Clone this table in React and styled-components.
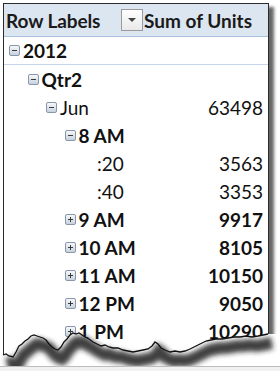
import React from 'react';
import styled, { createGlobalStyle } from 'styled-components';

const GlobalStyle = createGlobalStyle`
    html, body {
        margin: 0;
        padding: 0;
        background: #f1f1f1;
    }
    body {
        font-family: Lato, "Open Sans", sans-serif;
    }`;

const Page = styled.div`
    position: relative;
    width: 280px;
    height: 367px;
    box-sizing: border-box;
    padding: 3px 0 0 3px;
    background: #fff;
    border-bottom: 1px solid #bcbcbc;
    overflow: hidden`;

const Card = styled.div`
    width: 266px;
    box-sizing: border-box;
    border: 1px solid #2b2b2b;
    padding-bottom: 16px;
    background: #fff;
    box-shadow: 5px 4px 3px rgba(0, 0, 0, 0.6)`;

const Header = styled.div`
    display: flex;
    align-items: center;
    height: 32px;
    background: #dce6f1;
    border-bottom: 1px solid #a9c0de;
    color: #1a1a1a;
    font-weight: 700;
    font-size: 19px`;

const HeaderLabel = styled.div`
    display: flex;
    align-items: center;
    width: 140px;
    padding-left: 2px;
    box-sizing: border-box`;

const HeaderTitle = styled.span`
    margin-right: auto;
    letter-spacing: -0.1px`;

const DropButton = styled.span`
    display: flex;
    align-items: center;
    justify-content: center;
    width: 22px;
    height: 22px;
    margin-right: 1px;
    border: 1px solid #9a9a9a;
    background: linear-gradient(#ffffff, #e9e9e9);
    box-sizing: border-box`;

const Arrow = styled.span`
    width: 0;
    height: 0;
    border-left: 4px solid transparent;
    border-right: 4px solid transparent;
    border-top: 4px solid #444`;

const Row = styled.div`
    display: grid;
    grid-template-columns: 1fr auto;
    align-items: center;
    height: ${p => (p.divider ? 27 : 28)}px;
    padding-left: ${p => 5 + p.level * 18.5}px;
    padding-right: 5px;
    border-bottom: ${p => (p.divider ? '1px solid #c5d5ea' : 'none')};
    color: #111;
    font-size: 19px;
    font-weight: ${p => (p.bold ? 700 : 400)}`;

const Label = styled.div`
    display: flex;
    align-items: center`;

const Value = styled.div`
    text-align: right`;

const Toggle = styled.span`
    position: relative;
    flex: none;
    width: 11px;
    height: 11px;
    margin-right: 3px;
    box-sizing: border-box;
    border: 1px solid ${p => (p.empty ? 'transparent' : '#8796ab')};
    border-radius: 2px;
    background: ${p => (p.empty ? 'none' : 'linear-gradient(#f6f8fb, #c8d1dd)')};

    &::before, &::after {
        content: '';
        position: absolute;
        background: #3a3a3a;
        display: ${p => (p.empty ? 'none' : 'block')};
    }
    &::before {
        left: 2px;
        top: 4px;
        width: 5px;
        height: 1px;
    }
    &::after {
        left: 4px;
        top: 2px;
        width: 1px;
        height: 5px;
        display: ${p => (p.kind === 'plus' ? 'block' : 'none')};
    }`;

const TornEdge = styled.svg`
    position: absolute;
    left: 0;
    top: 0;
    pointer-events: none`;

const rows = [
    { label: '2012', level: 0, bold: true, toggle: 'minus', divider: true },
    { label: 'Qtr2', level: 1, bold: true, toggle: 'minus' },
    { label: 'Jun', level: 2, toggle: 'minus', value: '63498' },
    { label: '8 AM', level: 3, bold: true, toggle: 'minus' },
    { label: ':20', level: 4, value: '3563' },
    { label: ':40', level: 4, value: '3353' },
    { label: '9 AM', level: 3, bold: true, toggle: 'plus', value: '9917' },
    { label: '10 AM', level: 3, bold: true, toggle: 'plus', value: '8105' },
    { label: '11 AM', level: 3, bold: true, toggle: 'plus', value: '10150' },
    { label: '12 PM', level: 3, bold: true, toggle: 'plus', value: '9050' },
    { label: '1 PM', level: 3, bold: true, toggle: 'plus', value: '10290' },
];

// jagged bottom edge of the torn paper
const edge = [
    [3, 355], [6, 354], [9, 356], [13, 357], [16, 352], [19, 346], [22, 344], [25, 341],
    [28, 339], [31, 336], [34, 335], [37, 336], [40, 337], [43, 338], [46, 340], [49, 344],
    [52, 347], [55, 349], [58, 350], [61, 347], [64, 342], [67, 339], [70, 335], [73, 333],
    [76, 334], [79, 333], [82, 335], [85, 337], [89, 339], [93, 342], [97, 344], [101, 346],
    [105, 345], [109, 347], [113, 348], [118, 348], [123, 350], [128, 351], [133, 352],
    [138, 351], [143, 350], [148, 349], [152, 346], [155, 342], [158, 344], [161, 348],
    [165, 350], [170, 352], [175, 351], [180, 352], [185, 351], [190, 349], [194, 347],
    [198, 345], [202, 343], [206, 341], [211, 340], [216, 339], [222, 339], [228, 338],
    [234, 337], [240, 337], [246, 336], [252, 337], [258, 336], [263, 335], [268, 334],
];

const linePath = edge.map(([x, y], i) => `${i ? 'L' : 'M'}${x} ${y}`).join(' ');
const fillPath = `M0 ${edge[0][1]} ` + edge.map(([x, y]) => `L${x} ${y}`).join(' ') +
    ' L280 334 L280 367 L0 367 Z';

export default function App() {
    return (
        <Page>
            <GlobalStyle />
            <Card>
                <Header>
                    <HeaderLabel>
                        <HeaderTitle>Row Labels</HeaderTitle>
                        <DropButton><Arrow /></DropButton>
                    </HeaderLabel>
                    <span>Sum of Units</span>
                </Header>
                {rows.map(r => (
                    <Row key={r.label} level={r.level} bold={r.bold} divider={r.divider}>
                        <Label>
                            <Toggle kind={r.toggle} empty={!r.toggle} />
                            {r.label}
                        </Label>
                        <Value>{r.value}</Value>
                    </Row>
                ))}
            </Card>
            <TornEdge width="280" height="367" viewBox="0 0 280 367">
                <defs>
                    <filter id="tornBlur" x="-10%" y="-50%" width="120%" height="200%">
                        <feGaussianBlur stdDeviation="2.8" />
                    </filter>
                </defs>
                <path d={fillPath} fill="#fff" />
                <path d={linePath} transform="translate(4 9)" fill="none" stroke="#1e1e1e"
                    strokeWidth="12" strokeOpacity="0.85" filter="url(#tornBlur)" />
                <path d={linePath} fill="none" stroke="#111" strokeWidth="1.3" />
            </TornEdge>
        </Page>
    );
}
